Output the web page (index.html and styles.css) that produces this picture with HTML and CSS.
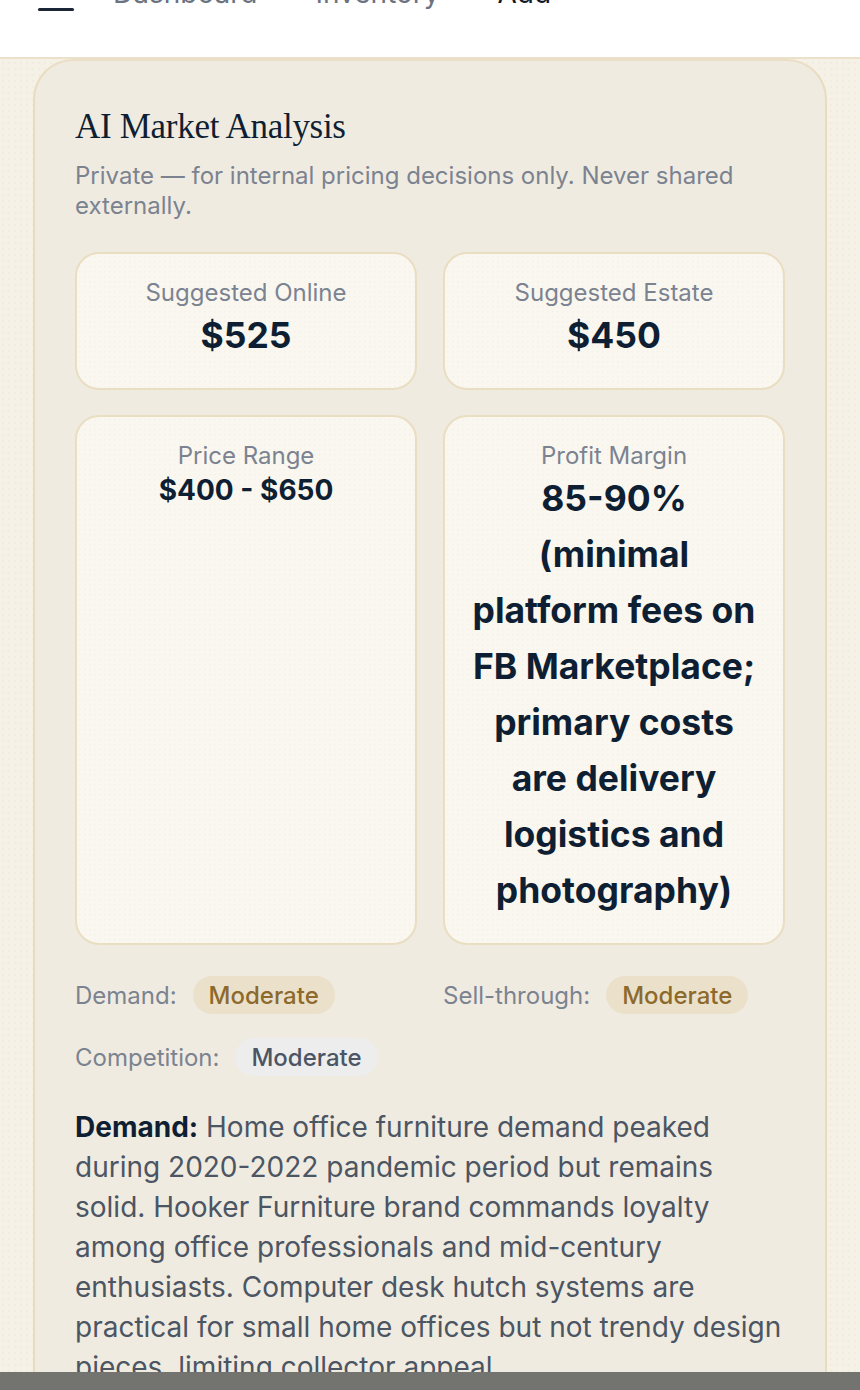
FILE: index.html
```html
<!DOCTYPE html>
<html lang="en">
<head>
<meta charset="utf-8">
<title>AI Market Analysis</title>
<link rel="stylesheet" href="styles.css">
</head>
<body>
<header class="topbar">
  <div class="topbar-row">
    <button class="menu-btn" aria-label="Menu">
      <span class="menu-line"></span>
      <span class="menu-line"></span>
      <span class="menu-line"></span>
    </button>
    <nav class="crumbs">
      <span class="crumb">Dashboard</span>
      <svg class="chev" viewBox="0 0 24 24" width="20" height="20"><path d="M9 6l6 6-6 6" fill="none" stroke="currentColor" stroke-width="2" stroke-linecap="round" stroke-linejoin="round"/></svg>
      <span class="crumb">Inventory</span>
      <svg class="chev" viewBox="0 0 24 24" width="20" height="20"><path d="M9 6l6 6-6 6" fill="none" stroke="currentColor" stroke-width="2" stroke-linecap="round" stroke-linejoin="round"/></svg>
      <span class="crumb crumb-current">Add</span>
    </nav>
  </div>
</header>

<main class="page">
  <section class="panel">
    <h2 class="panel-title">AI Market Analysis</h2>
    <p class="panel-sub">Private — for internal pricing decisions only. Never shared externally.</p>

    <div class="stats">
      <div class="stat">
        <div class="stat-label">Suggested Online</div>
        <div class="stat-value">$525</div>
      </div>
      <div class="stat">
        <div class="stat-label">Suggested Estate</div>
        <div class="stat-value">$450</div>
      </div>
      <div class="stat">
        <div class="stat-label">Price Range</div>
        <div class="stat-value stat-value-sm">$400 - $650</div>
      </div>
      <div class="stat">
        <div class="stat-label">Profit Margin</div>
        <div class="stat-value">85-90% (minimal platform fees on FB Marketplace; primary costs are delivery logistics and photography)</div>
      </div>
    </div>

    <div class="tags">
      <div class="tag-item"><span class="tag-label">Demand:</span><span class="badge badge-gold">Moderate</span></div>
      <div class="tag-item"><span class="tag-label">Sell-through:</span><span class="badge badge-gold">Moderate</span></div>
      <div class="tag-item"><span class="tag-label">Competition:</span><span class="badge badge-gray">Moderate</span></div>
    </div>

    <p class="notes"><strong>Demand:</strong> Home office furniture demand peaked during 2020-2022 pandemic period but remains solid. Hooker Furniture brand commands loyalty among office professionals and mid-century enthusiasts. Computer desk hutch systems are practical for small home offices but not trendy design pieces, limiting collector appeal.</p>
  </section>
</main>

<div class="bottom-bar"></div>
</body>
</html>
```

FILE: styles.css
```css
* { box-sizing: border-box; }

html, body {
  margin: 0;
  padding: 0;
}

body {
  font-family: "Inter", "Noto Sans", "Liberation Sans", sans-serif;
  background-color: #f5f1e7;
  background-image: radial-gradient(rgba(190, 170, 130, 0.07) 1px, transparent 1px);
  background-size: 6px 6px;
  color: #0f1f33;
  height: 1390px;
  overflow: hidden;
}

.topbar {
  height: 59px;
  background: #ffffff;
  border-bottom: 2px solid #ebe0c9;
  overflow: hidden;
}

.topbar-row {
  display: flex;
  align-items: center;
  gap: 39px;
  padding-left: 38px;
  margin-top: -29px;
  height: 44px;
}

.menu-btn {
  display: flex;
  flex-direction: column;
  gap: 8px;
  width: 36px;
  padding: 0;
  border: 0;
  background: transparent;
  margin-top: 10px;
}

.menu-line {
  display: block;
  height: 3px;
  width: 36px;
  border-radius: 2px;
  background: #1a2535;
}

.crumbs {
  display: flex;
  align-items: center;
  gap: 19px;
  font-size: 28px;
  color: #6b7280;
}

.chev { color: #c4c8cf; }

.crumb-current { color: #111827; }

.page {
  padding: 0 33px;
}

.panel {
  margin-top: 0;
  background: #f0ebe0;
  border: 2px solid #e8dcbf;
  border-top-color: #eadfc6;
  border-radius: 40px;
  padding: 44px 40px 60px;
  height: 1400px;
}

.panel-title {
  margin: 0;
  font-family: "Liberation Serif", "DejaVu Serif", serif;
  font-weight: 400;
  font-size: 35px;
  line-height: 44px;
  color: #0f1f33;
  letter-spacing: -0.3px;
}

.panel-sub {
  margin: 12px 0 0;
  font-size: 24px;
  line-height: 30px;
  color: #7b8391;
}

.stats {
  display: grid;
  grid-template-columns: 1fr 1fr;
  column-gap: 26px;
  row-gap: 25px;
  margin-top: 31px;
}

.stat {
  background-color: #faf7f0;
  background-image: radial-gradient(rgba(200, 180, 140, 0.07) 1px, transparent 1px);
  background-size: 5px 5px;
  border: 2px solid #e9ddc2;
  border-radius: 24px;
  padding: 24px 22px;
  text-align: center;
}

.stat-label {
  font-size: 24px;
  line-height: 30px;
  color: #7b8391;
}

.stat-value {
  font-size: 35.5px;
  line-height: 56px;
  font-weight: 700;
  color: #0f1f33;
}

.stat-value-sm {
  font-size: 28px;
  line-height: 38px;
}

.tags {
  display: grid;
  grid-template-columns: 1fr 1fr;
  column-gap: 26px;
  row-gap: 24px;
  margin-top: 31px;
}

.tag-item {
  display: flex;
  align-items: center;
  gap: 16px;
}

.tag-label {
  font-size: 24px;
  color: #7b8391;
}

.badge {
  display: inline-flex;
  align-items: center;
  height: 38px;
  padding: 0 16px;
  border-radius: 19px;
  font-size: 24px;
  font-weight: 500;
}

.badge-gold {
  background: #ebe1ca;
  color: #8d6a2c;
}

.badge-gray {
  background: #ededee;
  color: #4b5563;
}

.notes {
  margin: 31px 0 0;
  font-size: 28px;
  line-height: 40px;
  color: #4b5563;
}

.notes strong {
  color: #0f1f33;
  font-weight: 700;
}

.bottom-bar {
  position: fixed;
  left: 0;
  right: 0;
  bottom: 0;
  height: 18px;
  background: #737370;
}
```
